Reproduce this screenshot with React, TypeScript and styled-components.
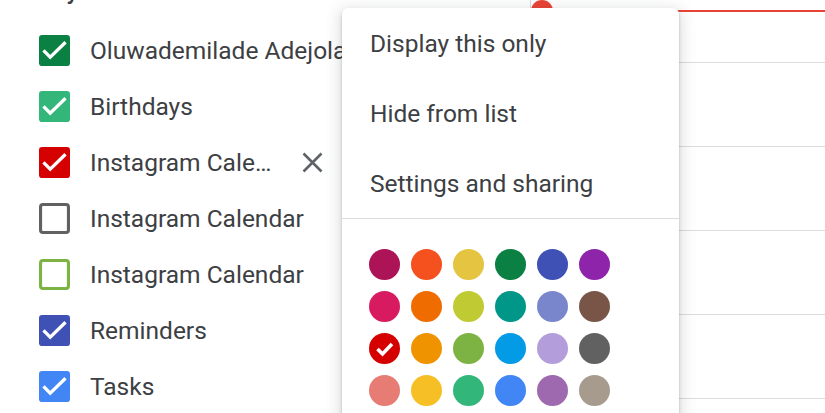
import styled, { createGlobalStyle } from 'styled-components';

/* Calendar sidebar with the per-calendar options menu open over the grid. */

const GlobalStyle = createGlobalStyle`
  html, body { margin: 0; padding: 0; background: #fff; }
  body { font-family: Roboto, "Liberation Sans", Arial, sans-serif; }
  * { box-sizing: border-box; }
`;

interface Cal {
  name: string;
  color: string;
  checked: boolean;
  hovered?: boolean;
}

const CALENDARS: Cal[] = [
  { name: 'Oluwademilade Adejola', color: '#0b8043', checked: true },
  { name: 'Birthdays', color: '#33b679', checked: true },
  { name: 'Instagram Calendar', color: '#d50000', checked: true, hovered: true },
  { name: 'Instagram Calendar', color: '#616161', checked: false },
  { name: 'Instagram Calendar', color: '#7cb342', checked: false },
  { name: 'Reminders', color: '#3f51b5', checked: true },
  { name: 'Tasks', color: '#4285f4', checked: true },
];

const PALETTE = [
  ['#ad1457', '#f4511e', '#e4c441', '#0b8043', '#3f51b5', '#8e24aa'],
  ['#d81b60', '#ef6c00', '#c0ca33', '#009688', '#7986cb', '#795548'],
  ['#d50000', '#f09300', '#7cb342', '#039be5', '#b39ddb', '#616161'],
  ['#e67c73', '#f6bf26', '#33b679', '#4285f4', '#9e69af', '#a79b8e'],
];
const SELECTED = '#d50000';

const MENU_ITEMS = ['Display this only', 'Hide from list', 'Settings and sharing'];

function Checkbox({ color, checked }: { color: string; checked: boolean }) {
  return (
    <Box width="31" height="31" viewBox="0 0 18 18" aria-hidden>
      {checked ? (
        <>
          <rect x="0" y="0" width="18" height="18" rx="1.8" fill={color} />
          <path d="M2.6 8.9 L6.5 12.9 L15.4 4.2" fill="none" stroke="#fff" strokeWidth="1.9" />
        </>
      ) : (
        <rect x="0.9" y="0.9" width="16.2" height="16.2" rx="1.4" fill="none" stroke={color} strokeWidth="1.8" />
      )}
    </Box>
  );
}

function CloseIcon() {
  return (
    <CloseSvg width="21" height="21" viewBox="0 0 21 21" aria-hidden>
      <path d="M1.5 1.5 L19.5 19.5 M19.5 1.5 L1.5 19.5" stroke="#5f6368" strokeWidth="2.6" />
    </CloseSvg>
  );
}

export default function App() {
  return (
    <Page>
      <GlobalStyle />
      <Sidebar>
        <Heading>My calendars</Heading>
        {CALENDARS.map((c, i) => (
          <CalendarRow key={i}>
            <Checkbox color={c.color} checked={c.checked} />
            <Label $truncate={!!c.hovered}>{c.name}</Label>
            {c.hovered && <CloseIcon />}
          </CalendarRow>
        ))}
      </Sidebar>

      <DayColumn>
        <NowLine />
        {Array.from({ length: 5 }).map((_, i) => (
          <HourSlot key={i} />
        ))}
      </DayColumn>

      <Menu role="menu">
        {MENU_ITEMS.map(label => (
          <MenuItem key={label} role="menuitem">
            {label}
          </MenuItem>
        ))}
        <Divider />
        <Palette>
          {PALETTE.flat().map(color => (
            <Swatch key={color} $color={color} aria-label={color}>
              {color === SELECTED && (
                <svg width="31" height="31" viewBox="0 0 31 31" aria-hidden>
                  <path d="M8.5 16 L13.5 21 L23 11" fill="none" stroke="#fff" strokeWidth="3.6" />
                </svg>
              )}
            </Swatch>
          ))}
        </Palette>
      </Menu>
    </Page>
  );
}

const Page = styled.div`
  position: relative;
  display: flex;
  width: 825px;
  height: 413px;
  overflow: hidden;
  background: #fff;
`;

const Sidebar = styled.aside`
  flex: 0 0 530px;
  padding-left: 39px;
  overflow: hidden;
`;

const Heading = styled.div`
  margin-top: -21px;
  margin-bottom: 19px;
  padding-left: 6px;
  font-size: 24.5px;
  line-height: 24px;
  font-weight: 500;
  color: #3c4043;
  white-space: nowrap;
`;

const CalendarRow = styled.div`
  display: flex;
  align-items: center;
  height: 56px;
  gap: 20px;
`;

const Box = styled.svg`
  flex-shrink: 0;
  display: block;
`;

const Label = styled.span<{ $truncate: boolean }>`
  font-size: 24.5px;
  color: #3c4043;
  white-space: nowrap;
  overflow: hidden;
  text-overflow: ellipsis;
  max-width: ${p => (p.$truncate ? '190px' : 'none')};
  flex-shrink: 0;
`;

const CloseSvg = styled.svg`
  flex-shrink: 0;
  display: block;
  margin-left: 2px;
`;

const DayColumn = styled.section`
  position: relative;
  flex: 1;
  padding-top: 62px;
  border-left: 1px solid #dadce0;
`;

const HourSlot = styled.div`
  height: 84px;
  border-top: 1px solid #dadce0;
`;

const NowLine = styled.div`
  position: absolute;
  top: 10px;
  left: 0;
  right: 0;
  height: 2px;
  background: #ea4335;

  &::before {
    content: '';
    position: absolute;
    left: 0;
    top: -10px;
    width: 22px;
    height: 22px;
    border-radius: 50%;
    background: #ea4335;
  }
`;

const Menu = styled.div`
  position: absolute;
  left: 342px;
  top: 8px;
  width: 337px;
  height: 430px;
  background: #fff;
  border-radius: 6px;
  box-shadow: 0 2px 3px 0 rgba(60, 64, 67, 0.3), 0 4px 14px 4px rgba(60, 64, 67, 0.15);
`;

const MenuItem = styled.div`
  display: flex;
  align-items: center;
  height: 70px;
  padding: 0 28px;
  font-size: 24.5px;
  color: #3c4043;
  white-space: nowrap;
`;

const Divider = styled.div`
  height: 1px;
  background: #dadce0;
`;

const Palette = styled.div`
  display: grid;
  grid-template-columns: repeat(6, 31px);
  gap: 11px;
  padding: 30px 27px;
`;

const Swatch = styled.div<{ $color: string }>`
  width: 31px;
  height: 31px;
  border-radius: 50%;
  background: ${p => p.$color};
  display: flex;
  align-items: center;
  justify-content: center;
`;
